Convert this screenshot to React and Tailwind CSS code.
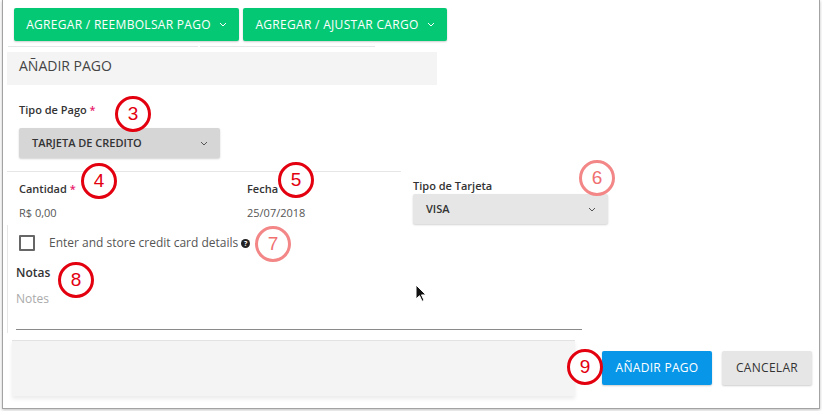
import React from "react";

const Chevron = ({ className = "" }) => (
  <svg width="8" height="5" viewBox="0 0 8 5" className={className}>
    <path d="M1 1l3 3 3-3" fill="none" stroke="currentColor" strokeWidth="1" />
  </svg>
);

const Marker = ({ n, x, y, light }) => (
  <div
    className={`absolute w-[36px] h-[36px] rounded-full border-[3px] bg-white flex items-center justify-center font-['Liberation_Sans',Arial,sans-serif] text-[19px] ${
      light ? "border-[#f38686] text-[#f07070]" : "border-[#e3000f] text-[#e3000f]"
    }`}
    style={{ left: x, top: y }}
  >
    {n}
  </div>
);

const Select = ({ label, width, bg }) => (
  <div className={`flex items-center justify-between h-[30px] rounded-[2px] pl-[13px] pr-[12px] shadow-[0_1px_2px_rgba(0,0,0,0.18)] ${width} ${bg}`}>
    <span className="text-[11px] font-semibold text-[#333]">{label}</span>
    <Chevron className="text-[#555]" />
  </div>
);

export default function App() {
  return (
    <div className="w-[822px] h-[411px] bg-white overflow-hidden font-['Open_Sans',sans-serif]">
      <div className="relative ml-[2px] w-[818px] h-[409px] border-x border-b border-[#a3a3a3] shadow-[0_1px_3px_rgba(0,0,0,0.25)]">
        {/* top actions */}
        <div className="flex gap-[4px] pl-[11px] pt-[8px]">
          <button className="w-[225px] h-[33px] bg-[#05c874] rounded-[2px] shadow-[0_1px_2px_rgba(0,0,0,0.2)] text-white text-[12px] tracking-[0.3px] flex items-center justify-center gap-[8px]">
            AGREGAR / REEMBOLSAR PAGO <Chevron />
          </button>
          <button className="w-[204px] h-[33px] bg-[#05c874] rounded-[2px] shadow-[0_1px_2px_rgba(0,0,0,0.2)] text-white text-[12px] tracking-[0.3px] flex items-center justify-center gap-[8px]">
            AGREGAR / AJUSTAR CARGO <Chevron />
          </button>
        </div>
        <div className="flex gap-[2px] pl-[5px] mt-[5px]">
          <div className="w-[190px] h-px bg-[#e6e6e6]" />
          <div className="w-[175px] h-px bg-[#e6e6e6]" />
        </div>

        {/* header */}
        <div className="ml-[4px] mt-[5px] w-[430px] h-[33px] bg-[#f4f4f4] pl-[12px] pt-[1px]">
          <span className="text-[14px] leading-[20px] text-[#444]">AÑADIR PAGO</span>
        </div>

        {/* Tipo de pago */}
        <div className="pl-[16px] mt-[17px]">
          <div className="text-[11px] leading-[16px] font-semibold text-[#333]">
            Tipo de Pago <span className="text-[#e8196b]">*</span>
          </div>
          <div className="mt-[10px]">
            <Select label="TARJETA DE CREDITO" width="w-[201px]" bg="bg-[#d6d6d6]" />
          </div>
        </div>

        <div className="flex">
          <div className="w-[398px]">
            <div className="ml-[4px] mt-[13px] w-[394px] h-px bg-[#e6e6e6]" />
            <div className="flex pl-[16px] mt-[9px]">
              <div className="w-[228px]">
                <div className="text-[11px] leading-[16px] font-semibold text-[#333]">
                  Cantidad <span className="text-[#e8196b]">*</span>
                </div>
                <div className="mt-[8px] text-[11px] leading-[16px] text-[#555]">R$ 0,00</div>
              </div>
              <div>
                <div className="text-[11px] leading-[16px] font-semibold text-[#333]">Fecha</div>
                <div className="mt-[8px] text-[11px] leading-[16px] text-[#555]">25/07/2018</div>
              </div>
            </div>
          </div>
          <div className="ml-[12px] mt-[20px]">
            <div className="text-[11px] leading-[16px] font-semibold text-[#333]">Tipo de Tarjeta</div>
            <Select label="VISA" width="w-[195px]" bg="bg-[#e6e6e6]" />
          </div>
        </div>

        {/* card details + notes */}
        <div className="ml-[4px] mt-[1px] h-[108px] border-l border-[#e6e6e6] pl-[11px] pt-[10px]">
          <div className="flex items-center">
            <div className="w-[16px] h-[16px] border-2 border-[#666] rounded-[1px]" />
            <span className="ml-[14px] text-[12px] leading-[16px] text-[#555]">Enter and store credit card details</span>
            <span className="ml-[3px] w-[9px] h-[9px] rounded-full bg-[#222] text-white text-[7px] leading-[9px] font-bold flex items-center justify-center">?</span>
          </div>
          <div className="-ml-[3px] mt-[13px] text-[12px] leading-[18px] font-semibold text-[#333]">Notas</div>
          <div className="-ml-[3px] mt-[8px] text-[12px] leading-[18px] text-[#aaa]">Notes</div>
          <div className="-ml-[3px] mt-[21px] w-[566px] h-px bg-[#8a8a8a]" />
        </div>

        {/* footer */}
        <div className="flex items-start mt-[7px]">
          <div className="ml-[9px] w-[563px] h-[56px] bg-[#f4f4f4] border-t border-[#e2e2e2] shadow-[0_3px_4px_rgba(0,0,0,0.08)]" />
          <button className="ml-[27px] mt-[11px] w-[110px] h-[34px] bg-[#0897e8] rounded-[2px] shadow-[0_1px_2px_rgba(0,0,0,0.2)] text-white text-[12px] tracking-[0.3px]">
            AÑADIR PAGO
          </button>
          <button className="ml-[10px] mt-[11px] w-[90px] h-[34px] bg-[#e6e6e6] rounded-[2px] shadow-[0_1px_2px_rgba(0,0,0,0.2)] text-[#333] text-[12px] tracking-[0.3px]">
            CANCELAR
          </button>
        </div>

        {/* annotations */}
        <Marker n="3" x={112} y={96} />
        <Marker n="4" x={78} y={163} />
        <Marker n="5" x={275} y={162} />
        <Marker n="6" x={576} y={160} light />
        <Marker n="7" x={252} y={226} light />
        <Marker n="8" x={55} y={262} />
        <Marker n="9" x={564} y={349} />

        {/* mouse cursor */}
        <svg className="absolute" style={{ left: 412, top: 284 }} width="12" height="18" viewBox="0 0 12 18">
          <path d="M1 1v14l3.5-3.3 2.6 5.6 2-0.9-2.6-5.5H11z" fill="#111" stroke="#fff" strokeWidth="1" />
        </svg>
      </div>
    </div>
  );
}
